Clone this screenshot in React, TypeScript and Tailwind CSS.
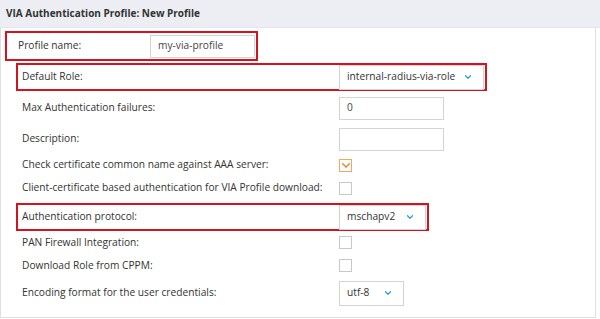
import { ChevronDown } from 'lucide-react';

const font = { fontFamily: '"Open Sans", "Liberation Sans", sans-serif' };

const Select = ({ value, width }: { value: string; width: string }) => (
  <div className={`${width} h-[25px] border border-[#d4d4d4] bg-white flex items-center justify-between pl-[7px] pr-[10px] text-[#333] whitespace-nowrap`}>
    <span>{value}</span>
    <ChevronDown className="w-[10px] h-[10px] text-[#2a9fd6]" strokeWidth={3} />
  </div>
);

const TextBox = ({ value }: { value?: string }) => (
  <div className="w-[105px] h-[23px] border border-[#d4d4d4] bg-white flex items-center pl-[7px] text-[#444]">
    {value}
  </div>
);

const Checkbox = ({ checked }: { checked?: boolean }) =>
  checked ? (
    <div className="w-[13px] h-[13px] border border-[#f0a860] bg-white flex items-center justify-center">
      <svg viewBox="0 0 12 12" className="w-[10px] h-[10px]">
        <path d="M1.5 4 L6 8.5 L10.5 4" fill="none" stroke="#ec8f3a" strokeWidth="1.8" />
      </svg>
    </div>
  ) : (
    <div className="w-[13px] h-[13px] border border-[#c8c8c8] bg-white" />
  );

const Row = ({ label, h, children }: { label: string; h: string; children?: React.ReactNode }) => (
  <div className={`${h} flex items-center pl-[21px]`}>
    <div className="w-[317px] whitespace-nowrap">{label}</div>
    {children}
  </div>
);

export default function App() {
  return (
    <div className="w-[600px] h-[319px] bg-white text-[10.2px] text-[#333]" style={font}>
      <div className="h-[28px] bg-[#eceef3] border-b border-[#e2e5ea] flex items-center pl-[6px] font-bold text-[10px] text-[#333]">
        VIA Authentication Profile: New Profile
      </div>
      <div className="w-[596px] h-[290px] border-r border-b border-l border-[#e0e0e0]">
        <div className="pt-[3px]">
          <div className="ml-[4px] w-[253px] h-[30px] border-2 border-[#d5121f] flex items-center pl-[11px]">
            <div className="w-[132px]">Profile name:</div>
            <TextBox value="my-via-profile" />
          </div>
        </div>
        <div className="pt-[2px]">
          <div className="ml-[15px] w-[471px] h-[28px] border-2 border-[#d5121f] flex items-center pl-[4px]">
            <div className="w-[317px]">Default Role:</div>
            <Select value="internal-radius-via-role" width="w-[145px]" />
          </div>
        </div>
        <Row label="Max Authentication failures:" h="h-[34px]">
          <TextBox value="0" />
        </Row>
        <Row label="Description:" h="h-[28px]">
          <TextBox />
        </Row>
        <Row label="Check certificate common name against AAA server:" h="h-[24px]">
          <Checkbox checked />
        </Row>
        <Row label="Client-certificate based authentication for VIA Profile download:" h="h-[22px]">
          <Checkbox />
        </Row>
        <div className="pt-[4px]">
          <div className="ml-[15px] w-[413px] h-[28px] border-2 border-[#d5121f] flex items-center pl-[4px]">
            <div className="w-[317px]">Authentication protocol:</div>
            <Select value="mschapv2" width="w-[87px]" />
          </div>
        </div>
        <Row label="PAN Firewall Integration:" h="h-[23px]">
          <Checkbox />
        </Row>
        <Row label="Download Role from CPPM:" h="h-[23px]">
          <Checkbox />
        </Row>
        <Row label="Encoding format for the user credentials:" h="h-[32px]">
          <Select value="utf-8" width="w-[65px]" />
        </Row>
      </div>
    </div>
  );
}
